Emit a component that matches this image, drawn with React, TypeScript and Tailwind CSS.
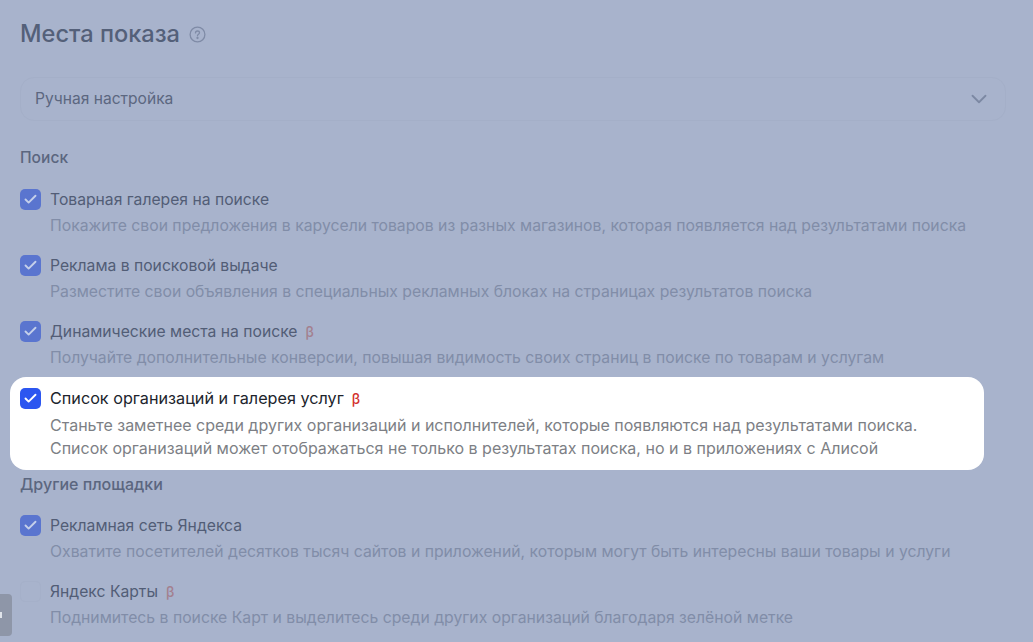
import { Check, ChevronDown } from 'lucide-react';

interface PlaceRowProps {
  title: string;
  text: string;
  checked?: boolean;
  beta?: boolean;
}

function PlaceRow({ title, text, checked = true, beta }: PlaceRowProps) {
  return (
    <div className="h-[66px] pt-[11px]">
      <div className="flex h-[21px] items-center">
        {checked ? (
          <span className="flex h-[21px] w-[21px] items-center justify-center rounded-[5px] bg-[#5a75cf]">
            <Check className="h-[15px] w-[15px] text-[#c5d0ea]" strokeWidth={3} />
          </span>
        ) : (
          <span className="h-[21px] w-[21px] rounded-[5px] border border-[#a5b0c9]" />
        )}
        <span className="ml-[9px] text-[15.7px] leading-[21px] text-[#525d76]">{title}</span>
        {beta && <span className="ml-[8px] text-[14px] font-medium leading-[21px] text-[#a3808f]">β</span>}
      </div>
      <p className="mt-[5px] pl-[30px] text-[15.75px] leading-[21px] text-[#818da8]">{text}</p>
    </div>
  );
}

export default function App() {
  return (
    <div className="relative h-[642px] w-[1033px] overflow-hidden bg-[#a8b3cc] font-['Inter',sans-serif]">
      <div className="pl-[20px] pt-[17px]">
        <div className="flex h-[34px] items-center">
          <h1 className="text-[23.6px] font-medium leading-[34px] text-[#546079]">Места показа</h1>
          <svg className="ml-[9px]" width="17" height="17" viewBox="0 0 17 17" fill="none" stroke="#7f8ba6" strokeWidth="1.3">
            <circle cx="8.5" cy="8.5" r="7.4" />
            <path d="M6.5 6.9c0-1.2.9-1.9 2-1.9s2 .7 2 1.8c0 1.5-2 1.5-2 3" strokeLinecap="round" />
            <circle cx="8.5" cy="12" r=".5" />
          </svg>
        </div>

        <div className="mt-[26px] flex h-[44px] w-[986px] items-center justify-between rounded-[14px] border border-[#a4afc8] pl-[14px] pr-[13px]">
          <span className="text-[15.6px] text-[#5c6780]">Ручная настройка</span>
          <ChevronDown className="h-[26px] w-[26px] text-[#7c88a3]" strokeWidth={1.7} />
        </div>

        <h2 className="mt-[26px] text-[15.6px] font-medium leading-[21px] text-[#5b667f]">Поиск</h2>

        <div className="mt-[21px]">
          <div className="-mt-[11px]">
            <PlaceRow
              title="Товарная галерея на поиске"
              text="Покажите свои предложения в карусели товаров из разных магазинов, которая появляется над результатами поиска"
            />
            <PlaceRow
              title="Реклама в поисковой выдаче"
              text="Разместите свои объявления в специальных рекламных блоках на страницах результатов поиска"
            />
            <PlaceRow
              beta
              title="Динамические места на поиске"
              text="Получайте дополнительные конверсии, повышая видимость своих страниц в поиске по товарам и услугам"
            />
          </div>

          <div className="-ml-[10px] mt-[1px] h-[93px] w-[974px] rounded-[16px] bg-white pl-[10px] pt-[11px]">
            <div className="flex h-[21px] items-center">
              <span className="flex h-[21px] w-[21px] items-center justify-center rounded-[5px] bg-[#2c56f0]">
                <Check className="h-[15px] w-[15px] text-white" strokeWidth={3} />
              </span>
              <span className="ml-[9px] text-[16.2px] leading-[21px] text-[#20242c]">Список организаций и галерея услуг</span>
              <span className="ml-[8px] text-[14px] font-medium leading-[21px] text-[#d3322f]">β</span>
            </div>
            <p className="mt-[5px] pl-[30px] text-[16px] leading-[23px] text-[#7d7f85]">
              Станьте заметнее среди других организаций и исполнителей, которые появляются над результатами поиска.
              <br />
              Список организаций может отображаться не только в результатах поиска, но и в приложениях с Алисой
            </p>
          </div>
        </div>

        <h2 className="mt-[4px] text-[16px] font-medium leading-[21px] text-[#5b667f]">Другие площадки</h2>

        <div className="mt-[9px]">
          <PlaceRow
            title="Рекламная сеть Яндекса"
            text="Охватите посетителей десятков тысяч сайтов и приложений, которым могут быть интересны ваши товары и услуги"
          />
          <PlaceRow
            beta
            checked={false}
            title="Яндекс Карты"
            text="Поднимитесь в поиске Карт и выделитесь среди других организаций благодаря зелёной метке"
          />
        </div>
      </div>

      <div className="absolute left-0 top-[594px] flex h-[42px] w-[12px] items-center rounded-r-[4px] bg-[#8e96a8]">
        <span className="h-[6px] w-[2px] bg-[#dfe3ea]" />
      </div>
    </div>
  );
}
